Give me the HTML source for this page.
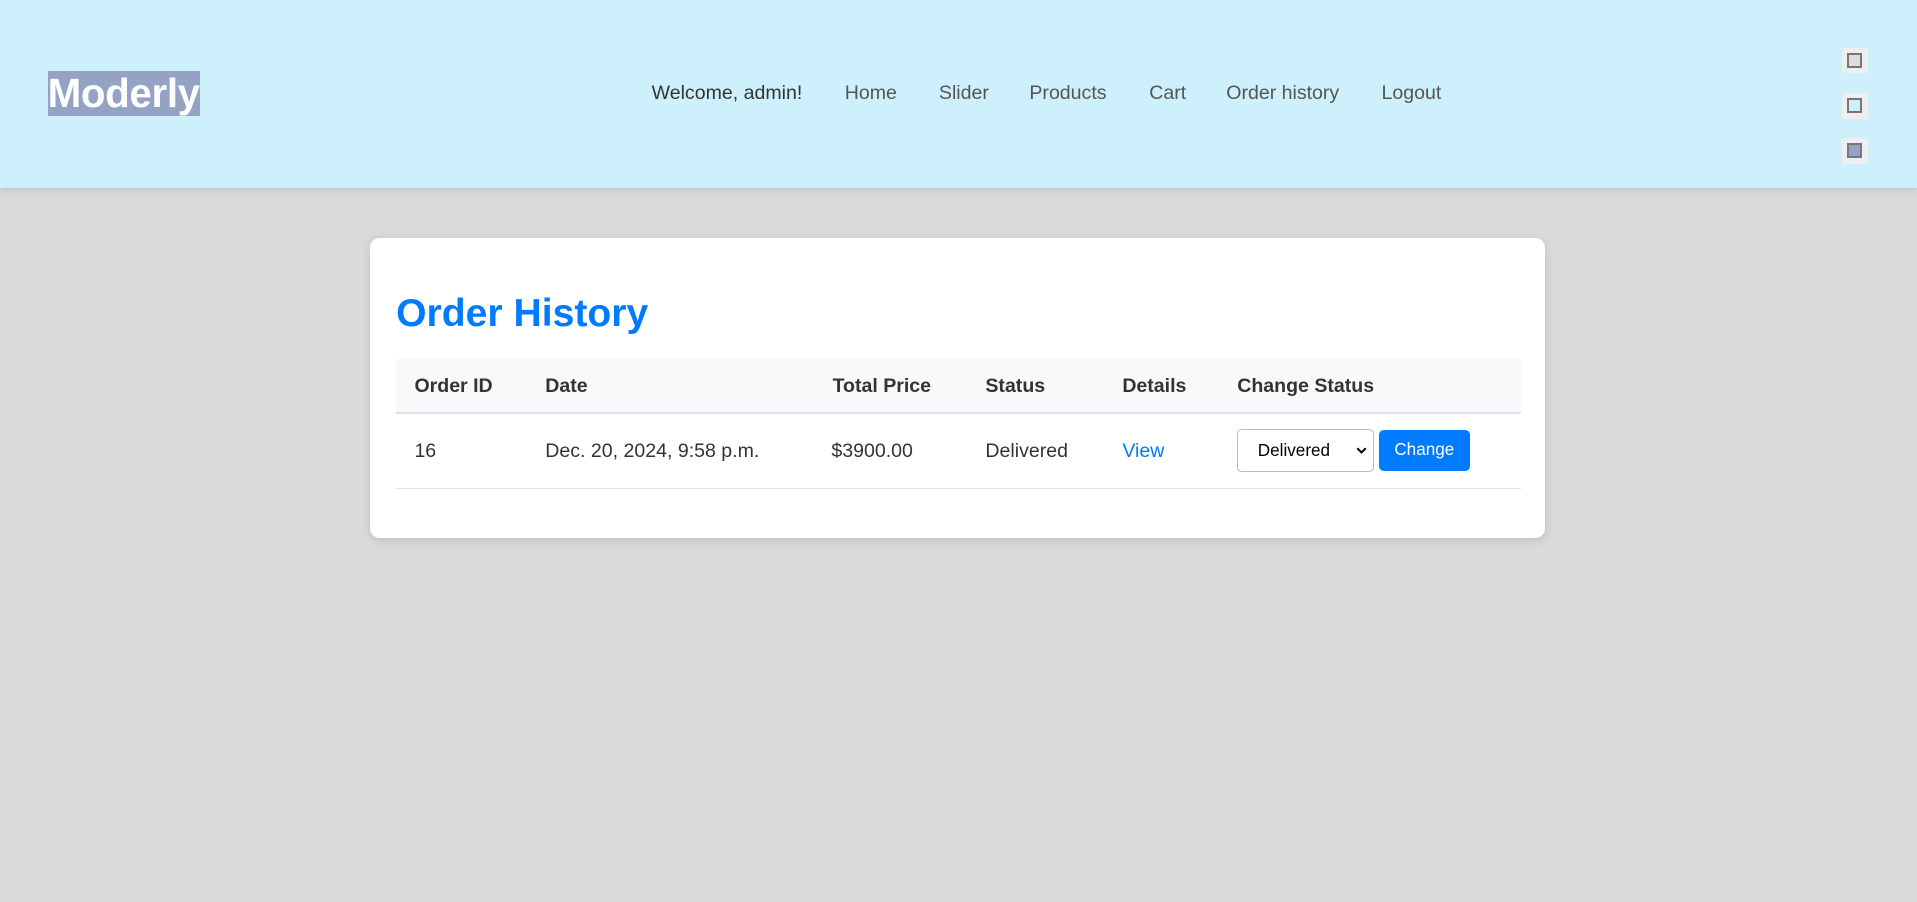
<!DOCTYPE html>
<html><head><meta charset="utf-8"><style>
html{zoom:1.22258}
body{margin:0;background:#dadada;font-family:"Liberation Sans",Arial,sans-serif;width:1568px;height:738px;overflow:hidden;position:relative}
header{position:absolute;left:0;top:0;width:1568px;height:154px;background:#cdf0fc;box-shadow:0 2px 6px rgba(0,0,0,.12)}
.logo{position:absolute;left:39px;top:58px;width:125px;height:37px;background:#94a3c4;color:#fff;font-weight:bold;font-size:33px;line-height:37px;letter-spacing:-0.3px}
nav{position:absolute;top:67px;left:533px;font-size:16px;color:#555;white-space:nowrap}
nav span{position:absolute;top:0}
.sw{position:absolute;left:1507px;width:21px;height:21px;background:#eee}
.sw i{position:absolute;left:4px;top:4px;width:9px;height:9px;border:2px solid #777}
.card{position:absolute;left:303px;top:195px;width:961px;height:245px;background:#fff;border-radius:8px;box-shadow:0 2px 8px rgba(0,0,0,.12)}
h2{position:absolute;left:21px;top:44px;margin:0;font-size:32px;color:#007bff;font-weight:bold}
.th{position:absolute;left:21px;top:99px;width:920px;height:43px;background:#f8f9fa;border-bottom:2px solid #dee2e6}
.rowb{position:absolute;left:21px;top:204px;width:920px;height:1px;background:#dee2e6}
.t{position:absolute;font-size:16px;color:#333;white-space:nowrap}
.b{font-weight:bold;top:112px}
.r{top:165px}
.sel{position:absolute;left:709px;top:156px;width:112px;height:35px;border:1px solid #bbb;border-radius:4px;font-size:14px;line-height:34px;box-sizing:border-box;padding-left:16px;color:#000}
.sel svg{position:absolute;right:5px;top:14px}
.btn{position:absolute;left:825px;top:157px;width:74px;height:33px;background:#007bff;border-radius:4px;color:#fff;font-size:14px;line-height:33px;text-align:center}
</style></head><body>
<header>
<div class="logo">Moderly</div>
<nav><span style="left:0;color:#333">Welcome, admin!</span><span style="left:158px">Home</span><span style="left:235px">Slider</span><span style="left:309px">Products</span><span style="left:407px">Cart</span><span style="left:470px">Order history</span><span style="left:597px">Logout</span></nav>
<div class="sw" style="top:39px"><i style="background:#ddd"></i></div>
<div class="sw" style="top:76px"><i style="background:#cdf0fc"></i></div>
<div class="sw" style="top:113px"><i style="background:#94a3c4"></i></div>
</header>
<div class="card">
<h2>Order History</h2>
<div class="th"></div><div class="rowb"></div>
<div class="t b" style="left:36px">Order ID</div>
<div class="t b" style="left:143px">Date</div>
<div class="t b" style="left:378px">Total Price</div>
<div class="t b" style="left:503px">Status</div>
<div class="t b" style="left:615px">Details</div>
<div class="t b" style="left:709px">Change Status</div>
<div class="t r" style="left:36px">16</div>
<div class="t r" style="left:143px">Dec. 20, 2024, 9:58 p.m.</div>
<div class="t r" style="left:377px">$3900.00</div>
<div class="t r" style="left:503px">Delivered</div>
<div class="t r" style="left:615px;color:#007bff">View</div>
<div class="sel">Delivered<svg width="9" height="6" viewBox="0 0 9 6"><path d="M1 1l3.5 3.5L8 1" fill="none" stroke="#000" stroke-width="1.6"/></svg></div>
<div class="btn">Change</div>
</div>
</body></html>
